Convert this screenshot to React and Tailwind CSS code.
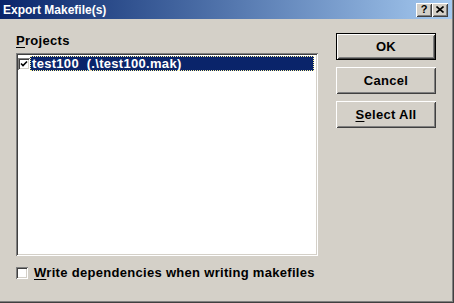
import React from 'react'

const font = { fontFamily: "'Liberation Sans', Arial, sans-serif" }

const raised =
  'shadow-[inset_1px_1px_0_#ffffff,inset_-1px_-1px_0_#404040,inset_2px_2px_0_#d4d0c8,inset_-2px_-2px_0_#808080]'
const sunken =
  'shadow-[inset_1px_1px_0_#808080,inset_-1px_-1px_0_#ffffff,inset_2px_2px_0_#404040,inset_-2px_-2px_0_#d4d0c8]'

function Check({ checked }) {
  return (
    <div className={`w-[12px] h-[12px] bg-white flex-shrink-0 ${sunken} flex items-center justify-center`}>
      {checked && (
        <svg width="8" height="8" viewBox="0 0 8 8">
          <path d="M1 3.5 L3 5.5 L7 1.5" stroke="#000" strokeWidth="1.6" fill="none" />
        </svg>
      )}
    </div>
  )
}

function Button({ children, isDefault }) {
  return (
    <div className={`w-[100px] h-[27px] bg-[#d4d0c8] ${isDefault ? 'border border-black' : ''}`}>
      <div className={`w-full h-full ${raised} flex items-center justify-center text-[13px] font-bold tracking-[0.3px] text-black`}>
        {children}
      </div>
    </div>
  )
}

export default function App() {
  return (
    <div
      className="w-[454px] h-[303px] bg-[#d4d0c8] relative overflow-hidden shadow-[inset_-1px_-1px_0_#404040,inset_-2px_-2px_0_#808080] flex flex-col"
      style={font}
    >
      {/* Title bar */}
      <div className="h-[19px] mr-[2px] flex items-center justify-between bg-gradient-to-r from-[#0a246a] to-[#a6caf0] pl-[3px] pr-[4px]">
        <span className="text-white text-[12px] font-bold leading-none">Export Makefile(s)</span>
        <div className="flex gap-0">
          <div className={`w-[16px] h-[14px] bg-[#d4d0c8] ${raised} flex items-center justify-center text-[11px] font-bold leading-none text-black`}>
            ?
          </div>
          <div className={`w-[16px] h-[14px] bg-[#d4d0c8] ${raised} flex items-center justify-center`}>
            <svg width="8" height="7" viewBox="0 0 8 7">
              <path d="M0.5 0.5 L7.5 6.5 M7.5 0.5 L0.5 6.5" stroke="#000" strokeWidth="1.6" />
            </svg>
          </div>
        </div>
      </div>

      {/* Body */}
      <div className="flex pl-[16px] pt-[14px] gap-[18px]">
        <div className="w-[302px] flex flex-col">
          <div className="text-[13px] font-bold tracking-[0.3px] leading-[16px] text-black">
            <span className="underline underline-offset-2">P</span>rojects
          </div>
          <div className={`mt-[4px] h-[203px] bg-white ${sunken} p-[2px]`}>
            <div className="flex items-center h-[15px] mt-px">
              <Check checked />
              <div className="flex-1 mr-[2px] h-full bg-[#0a246a] outline outline-1 outline-dotted outline-[#fff6a0] -outline-offset-1 flex items-center pl-[2px] text-white text-[13px] font-bold tracking-[0.3px] leading-none whitespace-pre">
                {'test100  (.\\test100.mak)'}
              </div>
            </div>
          </div>
          <div className="mt-[9px] flex items-center gap-[6px] h-[16px]">
            <Check />
            <span className="text-[13px] font-bold tracking-[0.3px] leading-[16px] text-black">
              <span className="underline underline-offset-2">W</span>rite dependencies when writing makefiles
            </span>
          </div>
        </div>

        <div className="flex flex-col gap-[7px] pt-0">
          <Button isDefault>OK</Button>
          <Button>Cancel</Button>
          <Button>
            <span>
              <span className="underline underline-offset-2">S</span>elect All
            </span>
          </Button>
        </div>
      </div>
    </div>
  )
}
